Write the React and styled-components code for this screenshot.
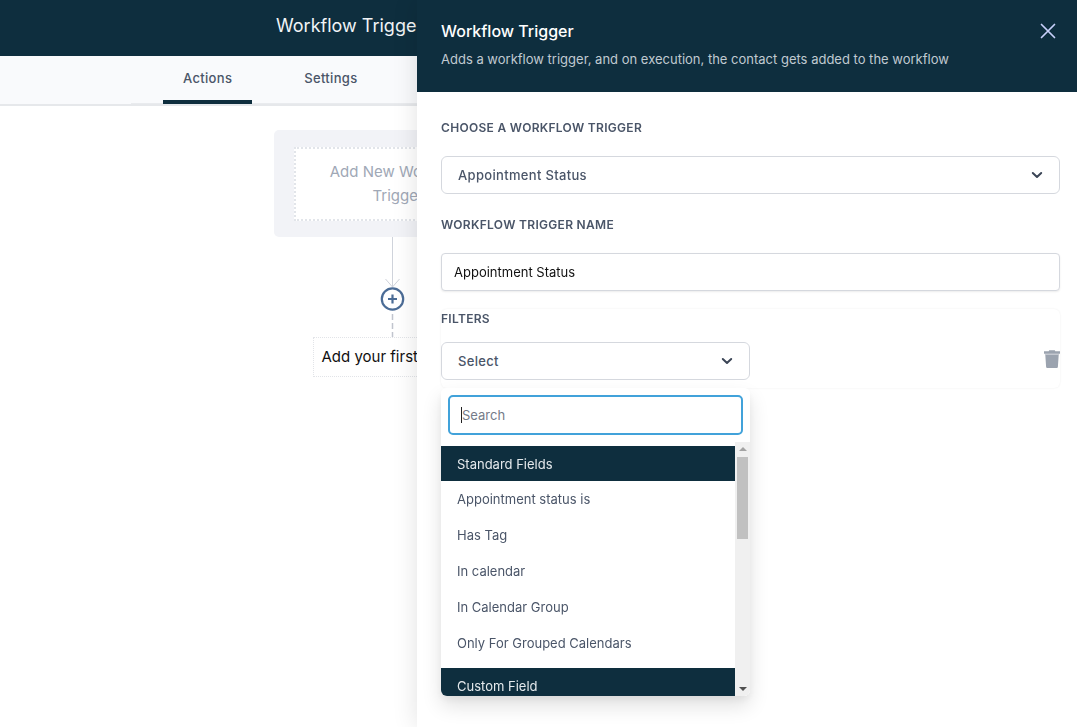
import React, { useState } from 'react'
import styled, { createGlobalStyle, css } from 'styled-components'

const GlobalStyle = createGlobalStyle`
  *,
  *::before,
  *::after {
    box-sizing: border-box;
  }
  body {
    margin: 0;
    background: #fff;
    color: #4a5568;
    font-family: Inter, 'Liberation Sans', sans-serif;
    font-size: 13px;
    line-height: 20px;
    overflow: hidden;
  }
  button,
  input,
  select {
    font: inherit;
    color: inherit;
  }
`

const Page = styled.main`
  min-height: 100vh;
`

const TopBar = styled.header`
  height: 56px;
  padding: 14px 0;
  background: #0e2e3e;
`

const PageTitle = styled.h1`
  max-width: 525px;
  margin: 0 auto;
  font-size: 18px;
  font-weight: 400;
  line-height: 24px;
  color: #f1f4f6;
`

const TabBar = styled.nav`
  background: #f9fafc;
  border-bottom: 2px solid #e6e8eb;
`

const TabList = styled.div`
  display: flex;
  gap: 32px;
  max-width: 815px;
  margin: 0 auto;
  padding: 0 32px;
  box-shadow: inset 0 -1px 0 #e9ebee;
`

const Tab = styled.a`
  padding: 12px 20px;
  border-bottom: 4px solid ${p => (p.$selected ? '#0e2e3e' : 'transparent')};
  font-weight: 500;
  text-decoration: none;
  letter-spacing: 0.025em;
  color: #4a5568;
`

const Canvas = styled.section`
  max-width: 529px;
  margin: 0 auto;
  padding-top: 24px;
`

const TriggerCard = styled.div`
  width: 248px;
  padding: 17px 20px 16px;
  border-radius: 5px;
  background: #f2f3f7;
`

const AddTrigger = styled.button`
  display: block;
  width: 100%;
  padding: 11px 32px;
  border: 2px dotted #e2e5ea;
  background: #fff;
  font-size: 15px;
  line-height: 24px;
  color: #a0a8b6;
`

const Flow = styled.div`
  display: flex;
  flex-direction: column;
  align-items: center;
  width: 237px;
`

const AddStep = styled.button`
  display: flex;
  padding: 0;
  border: 0;
  background: none;
`

const FirstAction = styled.button`
  min-width: 160px;
  padding: 7px 8px;
  border: 1px dotted #e2e4e8;
  background: #fff;
  font-size: 15px;
  line-height: 24px;
  text-align: left;
  color: #111;
`

const Drawer = styled.aside`
  position: fixed;
  top: 0;
  right: 0;
  bottom: 0;
  width: 660px;
  max-width: 100%;
  background: #fff;
  box-shadow: 0 0 24px rgba(0, 0, 0, 0.12);
`

const DrawerHeader = styled.header`
  display: flex;
  justify-content: space-between;
  align-items: flex-start;
  padding: 19px 20px 23px 24px;
  background: #0e2e3e;
`

const DrawerTitle = styled.h2`
  margin: 0;
  font-size: 16px;
  font-weight: 500;
  line-height: 24px;
  color: #fff;
`

const DrawerText = styled.p`
  margin: 6px 0 0;
  color: #c0cad1;
`

const CloseButton = styled.button`
  display: flex;
  margin-top: 3px;
  padding: 0;
  border: 0;
  background: none;
  color: #c8d0fa;
`

const DrawerBody = styled.form`
  padding: 26px 17px 0 24px;
`

const labelStyles = css`
  display: block;
  font-size: 12px;
  font-weight: 600;
  line-height: 20px;
  letter-spacing: 0.025em;
  text-transform: uppercase;
  color: #4a5568;
`

const Label = styled.label`
  ${labelStyles}
  margin-bottom: 18px;
`

const Field = styled.div`
  display: grid;
  align-items: center;
  margin-bottom: 21px;
`

const controlStyles = css`
  width: 100%;
  height: 38px;
  border: 1px solid #d5d8de;
  background: #fff;
  outline: none;
`

const Select = styled.select`
  ${controlStyles}
  grid-area: 1 / 1;
  appearance: none;
  padding: 0 40px 0 16px;
  border-radius: 6px;
  font-weight: 500;
  letter-spacing: 0.025em;
`

const SelectMark = styled.span`
  display: flex;
  grid-area: 1 / 1;
  justify-self: end;
  margin-right: 17px;
  pointer-events: none;
`

const TextInput = styled.input`
  ${controlStyles}
  margin-bottom: 18px;
  padding: 0 12px;
  border-radius: 4px;
  box-shadow: 0 1px 2px rgba(0, 0, 0, 0.08);
  color: #111;
`

const Filters = styled.fieldset`
  display: grid;
  grid-template-columns: 309px auto;
  justify-content: space-between;
  align-items: start;
  min-width: 0;
  margin: 0;
  padding: 0 0 8px;
  border: 0;
  border-radius: 6px;
  box-shadow: 0 0 2px rgba(0, 0, 0, 0.08);
`

const FiltersLabel = styled.span`
  ${labelStyles}
  grid-column: 1 / -1;
  margin-bottom: 13px;
`

const Picker = styled.div`
  position: relative;
`

const PickerButton = styled.button`
  ${controlStyles}
  display: flex;
  justify-content: space-between;
  align-items: center;
  padding: 0 16px;
  border-radius: 6px;
  font-weight: 500;
  letter-spacing: 0.025em;
`

const IconButton = styled.button`
  display: flex;
  padding: 8px 0;
  border: 0;
  background: none;
`

const Menu = styled.div`
  position: absolute;
  top: calc(100% + 8px);
  left: 0;
  width: 100%;
  border-radius: 6px;
  background: #fff;
  overflow: hidden;
`

const MenuShadow = styled.div`
  position: absolute;
  top: 46px;
  left: 0;
  right: 0;
  height: 308px;
  border-radius: 6px;
  box-shadow: 0 10px 20px rgba(0, 0, 0, 0.12), 0 4px 8px rgba(0, 0, 0, 0.05);
`

const SearchBox = styled.div`
  display: grid;
  align-items: center;
  padding: 7px;
`

const SearchInput = styled.input`
  ${controlStyles}
  height: 40px;
  grid-area: 1 / 1;
  padding: 0 12px;
  border: 2px solid #41a2da;
  border-radius: 5px;
  caret-color: transparent;
  &::placeholder {
    color: #757b88;
    opacity: 1;
  }
`

const Caret = styled.span`
  grid-area: 1 / 1;
  width: 1px;
  height: 16px;
  margin-left: 13px;
  background: #222;
`

const ListArea = styled.div`
  display: flex;
  height: 254px;
`

const Options = styled.div`
  flex: 1;
  min-width: 0;
  overflow: hidden;
`

const OptionGroup = styled.ul`
  margin: 0;
  padding: 4px 0 3px;
  list-style: none;
`

const GroupName = styled.li`
  padding: 8px 16px 7px;
  background: #0e2e3e;
  color: #e4e9ec;
`

const Option = styled.li`
  padding: 8px 16px;
`

const ScrollTrack = styled.div`
  display: flex;
  flex-direction: column;
  align-items: center;
  justify-content: space-between;
  width: 15px;
  padding: 5px 0;
  background: #f0f0f0;
`

const ScrollThumb = styled.div`
  width: 11px;
  height: 82px;
  margin: 6px 0 auto;
  background: #c1c1c1;
`

const ScrollArrow = styled.span`
  border: 4px solid transparent;
  border-top-width: ${p => (p.$up ? 0 : '4px')};
  border-bottom-width: ${p => (p.$up ? '4px' : 0)};
  border-${p => (p.$up ? 'bottom' : 'top')}-color: ${p =>
    p.$up ? '#a3a3a3' : '#505050'};
`

const groups = [
  {
    name: 'Standard Fields',
    options: [
      'Appointment status is',
      'Has Tag',
      'In calendar',
      'In Calendar Group',
      'Only For Grouped Calendars',
    ],
  },
  { name: 'Custom Field', options: [] },
]

const Chevron = () => (
  <svg width="12" height="12" viewBox="0 0 12 12" fill="none" aria-hidden="true">
    <path
      d="M1.8 4l4.2 4 4.2-4"
      stroke="#3b4556"
      strokeWidth="2"
      strokeLinecap="round"
      strokeLinejoin="round"
    />
  </svg>
)

const Cross = () => (
  <svg width="18" height="18" viewBox="0 0 18 18" aria-hidden="true">
    <path
      d="M2.5 2.5l13 13m0-13l-13 13"
      stroke="currentColor"
      strokeWidth="1.7"
      strokeLinecap="round"
    />
  </svg>
)

const Trash = () => (
  <svg width="16" height="18" viewBox="0 0 16 18" fill="#9ba3af" aria-hidden="true">
    <path d="M5.2.3h5.6l.5 1H16v2.4H0V1.3h4.7z" />
    <path d="M.9 3.7h14.2v1.2H.9z" opacity="0.5" />
    <path d="M1.3 4.8h13.4l-.8 12a1.2 1.2 0 0 1-1.2 1.2H3.3a1.2 1.2 0 0 1-1.2-1.2z" />
  </svg>
)

const Arrow = () => (
  <svg width="25" height="50" viewBox="0 0 25 50" fill="none" stroke="#cfd3db" aria-hidden="true">
    <path d="M12.5 0v50M5.5 42l7 8 7-8" />
  </svg>
)

const PlusCircle = () => (
  <svg width="25" height="24" viewBox="0 0 25 24" fill="none" stroke="#4b6c96" aria-hidden="true">
    <circle cx="12.5" cy="12" r="10.7" strokeWidth="2.2" />
    <path d="M12.5 7.5v9M8 12h9" strokeWidth="2.2" />
  </svg>
)

const Dashes = () => (
  <svg width="25" height="26" viewBox="0 0 25 26" fill="none" aria-hidden="true">
    <path d="M12.5 3v23" stroke="#c0c4cd" strokeWidth="1.5" strokeDasharray="6 3" />
  </svg>
)

const FilterPicker = () => {
  const [search, setSearch] = useState('')
  const matches = option => option.toLowerCase().includes(search.toLowerCase())
  return (
    <Picker>
      <PickerButton type="button" aria-haspopup="listbox" aria-expanded="true">
        Select
        <Chevron />
      </PickerButton>
      <MenuShadow />
      <Menu>
        <SearchBox>
          <SearchInput
            type="text"
            aria-label="Search"
            placeholder="Search"
            value={search}
            onChange={e => setSearch(e.target.value)}
          />
          {!search && <Caret />}
        </SearchBox>
        <ListArea>
          <Options role="listbox" aria-label="Filter fields">
            {groups.map(group => (
              <OptionGroup key={group.name} role="group" aria-label={group.name}>
                <GroupName role="presentation">{group.name}</GroupName>
                {group.options.filter(matches).map(option => (
                  <Option key={option} role="option">
                    {option}
                  </Option>
                ))}
              </OptionGroup>
            ))}
          </Options>
          <ScrollTrack aria-hidden="true">
            <ScrollArrow $up />
            <ScrollThumb />
            <ScrollArrow />
          </ScrollTrack>
        </ListArea>
      </Menu>
    </Picker>
  )
}

const TriggerDrawer = () => (
  <Drawer aria-labelledby="drawer-title">
    <DrawerHeader>
      <div>
        <DrawerTitle id="drawer-title">Workflow Trigger</DrawerTitle>
        <DrawerText>
          Adds a workflow trigger, and on execution, the contact gets added to
          the workflow
        </DrawerText>
      </div>
      <CloseButton type="button" aria-label="Close">
        <Cross />
      </CloseButton>
    </DrawerHeader>
    <DrawerBody>
      <Label htmlFor="trigger">Choose a workflow trigger</Label>
      <Field>
        <Select id="trigger" defaultValue="appointment">
          <option value="appointment">Appointment Status</option>
        </Select>
        <SelectMark>
          <Chevron />
        </SelectMark>
      </Field>
      <Label htmlFor="trigger-name">Workflow trigger name</Label>
      <TextInput id="trigger-name" type="text" defaultValue="Appointment Status" />
      <Filters aria-labelledby="filters-label">
        <FiltersLabel id="filters-label">Filters</FiltersLabel>
        <FilterPicker />
        <IconButton type="button" aria-label="Delete filter">
          <Trash />
        </IconButton>
      </Filters>
    </DrawerBody>
  </Drawer>
)

const App = () => (
  <>
    <GlobalStyle />
    <Page>
      <TopBar>
        <PageTitle>Workflow Trigger</PageTitle>
      </TopBar>
      <TabBar>
        <TabList>
          <Tab href="#actions" $selected>
            Actions
          </Tab>
          <Tab href="#settings">Settings</Tab>
        </TabList>
      </TabBar>
      <Canvas>
        <TriggerCard>
          <AddTrigger type="button">Add New Workflow Trigger</AddTrigger>
        </TriggerCard>
        <Flow>
          <Arrow />
          <AddStep type="button" aria-label="Add step">
            <PlusCircle />
          </AddStep>
          <Dashes />
          <FirstAction type="button">Add your first</FirstAction>
        </Flow>
      </Canvas>
    </Page>
    <TriggerDrawer />
  </>
)

export default App
